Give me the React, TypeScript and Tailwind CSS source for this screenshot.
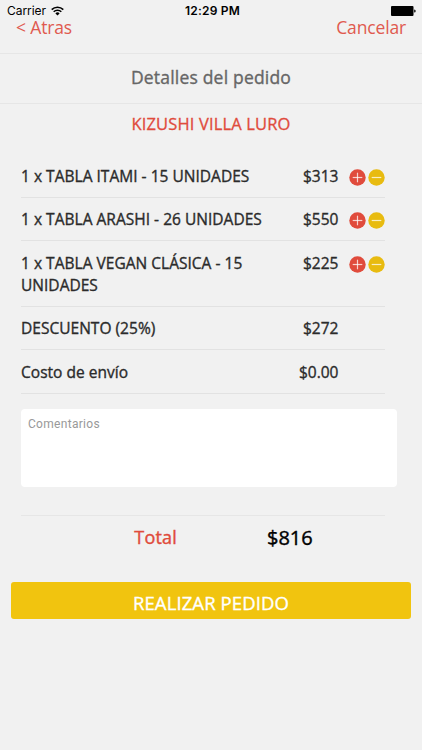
import { useState } from 'react'

type OrderItem = {
  title: string
  price: string
  editable: boolean
}

const items: OrderItem[] = [
  { title: '1 x TABLA ITAMI - 15 UNIDADES', price: '$313', editable: true },
  { title: '1 x TABLA ARASHI - 26 UNIDADES', price: '$550', editable: true },
  { title: '1 x TABLA VEGAN CLÁSICA - 15 UNIDADES', price: '$225', editable: true },
  { title: 'DESCUENTO (25%)', price: '$272', editable: false },
  { title: 'Costo de envío', price: '$0.00', editable: false },
]

function StatusBar() {
  return (
    <div className="grid h-5 grid-cols-3 items-center pt-0.5 pr-1.5 pl-[7px] font-['Inter',sans-serif] text-[12px] leading-3 text-black">
      <div className="flex items-center gap-[5px]">
        <span className="tracking-[-0.05px]">Carrier</span>
        <svg width="13" height="10" viewBox="0 0 13 10" fill="none" stroke="#000" strokeWidth="1.6">
          <path d="M0.7 3.6a8.2 8.2 0 0 1 11.6 0" />
          <path d="M2.7 5.8a5.4 5.4 0 0 1 7.6 0" />
          <path d="M6.5 9.6 4.4 7.4a3 3 0 0 1 4.2 0z" fill="#000" stroke="none" />
        </svg>
      </div>
      <span className="pl-0.5 text-center font-semibold tracking-[0.2px] whitespace-nowrap">12:29 PM</span>
      <div className="flex justify-end">
        <svg width="25" height="10" viewBox="0 0 25 10">
          <rect width="22.5" height="10" rx="1" />
          <path d="M23.2 3.4q1.5 0 1.5 1.6t-1.5 1.6z" />
        </svg>
      </div>
    </div>
  )
}

function RoundButton({ kind }: { kind: 'plus' | 'minus' }) {
  return (
    <button type="button" aria-label={kind}>
      <svg width="17" height="17" viewBox="0 0 17 17" stroke="#fff" strokeOpacity="0.75" strokeWidth="1.2">
        <circle cx="8.5" cy="8.5" r="8.2" fill={kind === 'plus' ? '#e04b3c' : '#e8bb10'} stroke="none" />
        <path d="M3.7 8.5h9.6" />
        {kind === 'plus' && <path d="M8.5 3.7v9.6" />}
      </svg>
    </button>
  )
}

function OrderRow({ item }: { item: OrderItem }) {
  return (
    <li className="flex items-start border-b border-[#e2e2e2] pt-[10.5px] pb-[10px] text-[15.5px] leading-[22px] tracking-[0.02px] text-[#2b2b2b] [-webkit-text-stroke:0.35px]">
      <span className="w-[250px]">{item.title}</span>
      <span className="flex-1 text-right">{item.price}</span>
      <span className="flex w-[46.5px] justify-end gap-[2px] pt-1">
        {item.editable && (
          <>
            <RoundButton kind="plus" />
            <RoundButton kind="minus" />
          </>
        )}
      </span>
    </li>
  )
}

export default function App() {
  const [comments, setComments] = useState('')

  return (
    <div className="h-[750px] w-[422px] overflow-hidden bg-[#f1f1f1] font-['Open_Sans',sans-serif]">
      <StatusBar />
      <nav className="flex h-[34px] justify-between border-b border-[#e6e6e6] px-4 text-[17.5px] leading-[15px] tracking-[-0.15px] text-[#e05a4f]">
        <button type="button" className="h-[15px]">{'< Atras'}</button>
        <button type="button" className="h-[15px]">Cancelar</button>
      </nav>
      <h1 className="h-[50px] border-b border-[#e6e6e6] text-center text-[17.5px] leading-[47px] tracking-[0.2px] text-[#666] [-webkit-text-stroke:0.35px]">
        Detalles del pedido
      </h1>
      <h2 className="h-[50px] pt-2 text-center text-[16.5px] leading-6 tracking-[0.15px] text-[#e04b3c] [-webkit-text-stroke:0.3px]">
        KIZUSHI VILLA LURO
      </h2>
      <ul className="mr-[37px] ml-[21px]">
        {items.map((item) => (
          <OrderRow key={item.title} item={item} />
        ))}
      </ul>
      <textarea
        className="mt-[15px] ml-[21px] block h-[78px] w-[376px] resize-none rounded bg-white px-[7px] py-[7px] font-['Roboto',sans-serif] text-[12px] leading-4 tracking-[0.3px] outline-none placeholder:text-[#999]"
        placeholder="Comentarios"
        value={comments}
        onChange={(e) => setComments(e.target.value)}
      />
      <div className="mt-7 mr-[37px] ml-[21px] flex h-[45px] border-t border-[#e6e6e6] leading-[43px] [-webkit-text-stroke:0.4px]">
        <span className="w-[156px] text-right text-[18px] tracking-[0.2px] text-[#e04b3c]">Total</span>
        <span className="ml-[90px] text-[20px] text-black">$816</span>
      </div>
      <button
        type="button"
        className="mx-[11px] mt-[22px] block h-[37px] w-[400px] rounded-[3px] bg-[#f1c40f] pt-[5px] text-center text-[18.5px] leading-[31px] tracking-[0.1px] text-white [-webkit-text-stroke:0.35px]"
      >
        REALIZAR PEDIDO
      </button>
    </div>
  )
}
